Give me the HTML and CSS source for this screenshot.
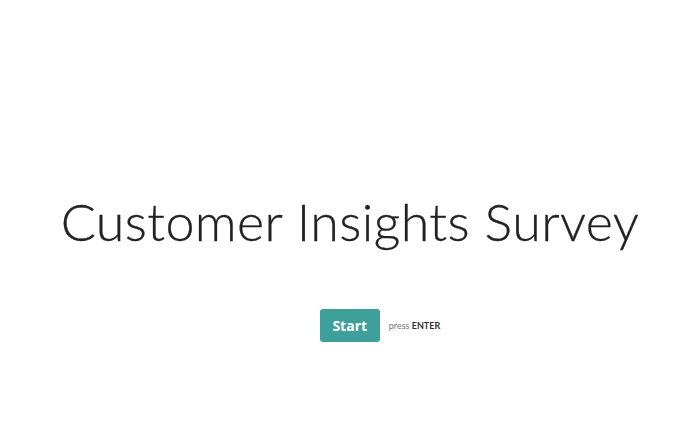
FILE: index.html
```html
<!DOCTYPE html>
<html lang="en">
<head>
    <meta charset="UTF-8">
    <meta name="viewport" content="width=device-width, initial-scale=1.0">
    <title>Customer Insights Survey</title>
    <link rel="stylesheet" href="styles.css">
</head>
<body>
    <div class="welcome">
        <h1 class="title">Customer Insights Survey</h1>
        <div class="actions">
            <button type="button" class="start">Start</button>
            <span class="hint">press <strong>ENTER</strong></span>
        </div>
    </div>
</body>
</html>
```

FILE: styles.css
```css
body {
    font-family: Lato, "Liberation Sans", sans-serif;
    background-color: #ffffff;
    margin: 0;
    padding: 0;
    height: 436px;
    display: flex;
    align-items: center;
    justify-content: center;
}
.welcome {
    display: flex;
    flex-direction: column;
    align-items: center;
    margin-top: 96px;
}
.title {
    font-family: Lato, sans-serif;
    font-weight: 300;
    font-size: 52px;
    color: #222222;
    margin: 0;
    letter-spacing: 0.4px;
    -webkit-text-stroke: 0.3px #222222;
}
.actions {
    display: flex;
    align-items: center;
    margin-top: 57px;
    margin-left: 60px;
}
.start {
    font-family: "Open Sans", sans-serif;
    font-weight: 700;
    font-size: 14px;
    color: #ffffff;
    background-color: #3f9f9b;
    border: none;
    border-radius: 3px;
    width: 60px;
    height: 33px;
    padding: 0;
}
.hint {
    font-size: 9px;
    color: #777;
    margin-left: 9px;
}
.hint strong {
    color: #333;
}
```
